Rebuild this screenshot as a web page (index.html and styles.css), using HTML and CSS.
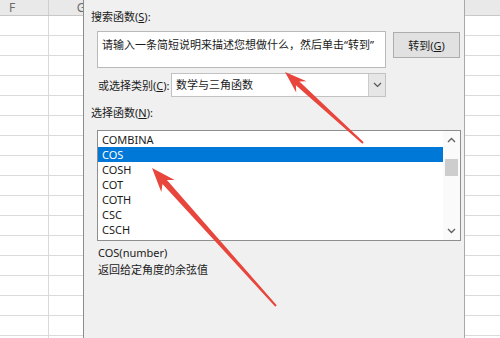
FILE: index.html
```html
<!DOCTYPE html>
<html lang="zh-CN">
<head>
    <meta charset="UTF-8">
    <title>插入函数</title>
    <link rel="stylesheet" href="styles.css">
</head>
<body>

<div class="screen">
    <div class="sheet sheet-left">
        <div class="sheet-head">
            <div class="col col-f">F</div>
            <div class="col col-g">G</div>
        </div>
        <div class="sheet-body grid-left"></div>
    </div>

    <div class="dialog">
        <div class="label">搜索函数(<u>S</u>):</div>
        <div class="search-row">
            <div class="search-box">请输入一条简短说明来描述您想做什么，然后单击“转到”</div>
            <button class="btn">转到(<u>G</u>)</button>
        </div>

        <div class="category-row">
            <span class="category-label">或选择类别(<u>C</u>):</span>
            <div class="combo">
                <span class="combo-text">数学与三角函数</span>
                <span class="combo-arrow">
                    <svg width="9" height="6" viewBox="0 0 9 6"><polyline points="1,1 4.5,4.5 8,1" fill="none" stroke="#555" stroke-width="1.2"/></svg>
                </span>
            </div>
        </div>

        <div class="label label-list">选择函数(<u>N</u>):</div>
        <div class="listbox">
            <ul class="items">
                <li>COMBINA</li>
                <li class="selected">COS</li>
                <li>COSH</li>
                <li>COT</li>
                <li>COTH</li>
                <li>CSC</li>
                <li>CSCH</li>
            </ul>
            <div class="scrollbar">
                <svg class="chev" width="9" height="6" viewBox="0 0 9 6"><polyline points="1,5 4.5,1.5 8,5" fill="none" stroke="#606060" stroke-width="1.3"/></svg>
                <div class="track"><div class="thumb"></div></div>
                <svg class="chev" width="9" height="6" viewBox="0 0 9 6"><polyline points="1,1 4.5,4.5 8,1" fill="none" stroke="#606060" stroke-width="1.3"/></svg>
            </div>
        </div>

        <div class="syntax">COS(number)</div>
        <div class="desc">返回给定角度的余弦值</div>
    </div>

    <div class="sheet sheet-right">
        <div class="sheet-head"></div>
        <div class="sheet-body grid-right"></div>
    </div>

    <!-- red annotation arrows -->
    <svg class="arrows" width="500" height="338" viewBox="0 0 500 338">
        <polygon fill="#e8463c" points="285,72 306.5,81.2 299.4,81.5 363.7,142.3 362.3,143.7 295.9,85.3 296.2,92.5"/>
        <polygon fill="#e8463c" points="152,168 174.7,179.9 166.9,180.1 276.7,305.3 275.3,306.7 162.5,184.1 161.3,191.9"/>
    </svg>
</div>

</body>
</html>
```

FILE: styles.css
```css
body {
    margin: 0;
    font-family: "Noto Sans", "Noto Sans CJK SC", sans-serif;
    font-size: 11px;
    color: #1a1a1a;
    background-color: #ffffff;
}
.screen {
    position: relative;
    width: 500px;
    height: 338px;
    display: flex;
    overflow: hidden;
}

/* spreadsheet behind the dialog */
.sheet {
    display: flex;
    flex-direction: column;
    overflow: hidden;
}
.sheet-left {
    width: 83px;
}
.sheet-right {
    flex: 1;
}
.sheet-head {
    height: 15px;
    display: flex;
    background-color: #e9e9e9;
    border-bottom: 1px solid #c8c8c8;
    color: #6a6a6a;
    font-size: 12px;
    line-height: 15px;
}
.col {
    flex: none;
    box-sizing: border-box;
}
.col-f {
    width: 49px;
    padding-left: 9px;
    border-right: 1px solid #cfcfcf;
}
.col-g {
    width: 64px;
    text-align: center;
}
.sheet-body {
    flex: 1;
    background-color: #ffffff;
}
.grid-left {
    background-image:
        linear-gradient(to right, transparent 48px, #d9d9d9 48px, #d9d9d9 49px, transparent 49px),
        repeating-linear-gradient(to bottom, transparent 0, transparent 19px, #dadada 19px, #dadada 20px);
}
.grid-right {
    background-image:
        repeating-linear-gradient(to bottom, transparent 0, transparent 19px, #dadada 19px, #dadada 20px);
}

/* dialog */
.dialog {
    width: 382px;
    flex: none;
    box-sizing: border-box;
    background-color: #f0f0f0;
    border-left: 1px solid #8c8c8c;
    border-right: 1px solid #a8a8a8;
    box-shadow: 2px 0 2px rgba(0, 0, 0, 0.08);
    padding: 10px 0 0 7px;
}
.label {
    line-height: 14px;
}
.search-row {
    display: flex;
    align-items: flex-start;
    margin-top: 7px;
    padding-left: 6px;
}
.search-box {
    width: 289px;
    height: 37px;
    box-sizing: border-box;
    background-color: #ffffff;
    border: 1px solid #b9b9b9;
    padding: 6px 4px 0;
    line-height: 14px;
    white-space: nowrap;
    overflow: hidden;
}
.btn {
    width: 67px;
    height: 26px;
    margin: 1px 0 0 7px;
    background-color: #e1e1e1;
    border: 1px solid #adadad;
    font-family: inherit;
    font-size: 11px;
    color: #1a1a1a;
    padding: 0;
}
.category-row {
    display: flex;
    align-items: center;
    margin-top: 5px;
    padding-left: 7px;
}
.category-label {
    width: 73px;
}
.combo {
    width: 215px;
    height: 24px;
    box-sizing: border-box;
    display: flex;
    background-color: #ffffff;
    border: 1px solid #c2c2c2;
}
.combo-text {
    flex: 1;
    padding-left: 4px;
    line-height: 22px;
}
.combo-arrow {
    width: 16px;
    display: flex;
    align-items: center;
    justify-content: center;
    background-color: #e6e6e6;
    border-left: 1px solid #cccccc;
}
.label-list {
    margin-top: 9px;
}
.listbox {
    width: 364px;
    height: 111px;
    box-sizing: border-box;
    margin: 10px 0 0 6px;
    display: flex;
    background-color: #ffffff;
    border: 1px solid #8e8e8e;
}
.items {
    list-style: none;
    margin: 0;
    padding: 1px 0 0;
    flex: 1;
}
.items li {
    height: 15px;
    line-height: 15px;
    padding-left: 4px;
}
.items li.selected {
    background-color: #0078d7;
    color: #ffffff;
}
.scrollbar {
    width: 17px;
    display: flex;
    flex-direction: column;
    align-items: center;
    background-color: #fafafa;
}
.chev {
    margin: 6px 0;
}
.track {
    flex: 1;
    width: 100%;
}
.thumb {
    margin: 10px 2px 0;
    height: 17px;
    background-color: #cdcdcd;
}
.syntax {
    margin-top: 5px;
    padding-left: 7px;
    line-height: 14px;
}
.desc {
    margin-top: 3px;
    padding-left: 7px;
    line-height: 14px;
}

/* annotation overlay */
.arrows {
    position: absolute;
    left: 0;
    top: 0;
    pointer-events: none;
}
```
